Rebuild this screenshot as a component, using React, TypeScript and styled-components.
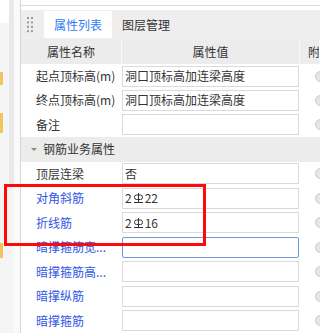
import styled, { createGlobalStyle } from "styled-components";

const GlobalStyle = createGlobalStyle`
  html, body {
    margin: 0;
    padding: 0;
    background: #ffffff;
  }
  body {
    font-family: "Noto Sans CJK SC", "Liberation Sans", sans-serif;
    font-size: 12px;
    color: #333333;
  }
`;

const Page = styled.div`
  position: relative;
  width: 320px;
  height: 333px;
  overflow: hidden;
  display: flex;
  background: #ffffff;
`;

const SideStrip = styled.div`
  width: 20px;
  flex-shrink: 0;
  display: flex;
  background: #f5f5f5;
`;

const MarkColumn = styled.div`
  width: 9px;
  display: flex;
  flex-direction: column;
`;

const MarkTop = styled.div`
  height: 23px;
  background: #ffffff;
`;

const Mark = styled.div<{ $gap: number; $h: number }>`
  width: 3px;
  height: ${(p) => p.$h}px;
  margin-top: ${(p) => p.$gap}px;
  background: #f2c462;
`;

const Track = styled.div`
  width: 5px;
  height: 187px;
  background: #e9e9e9;
  border-radius: 0 0 2px 2px;
`;

const StripEdge = styled.div`
  flex: 1;
  background: #fafafa;
`;

const Panel = styled.div`
  flex: 1;
  display: flex;
  flex-direction: column;
  border-left: 1px solid #d6d6d6;
  min-width: 0;
`;

const TopBox = styled.div`
  height: 5px;
  border-bottom: 1px solid #dcdcdc;
  margin-bottom: 4px;
`;

const TabBar = styled.div`
  height: 30px;
  box-sizing: border-box;
  padding: 1px 0;
  display: flex;
  align-items: stretch;
  background: #eeeeee;
`;

const Grip = styled.div`
  width: 23px;
  display: flex;
  align-items: center;
  padding-left: 6px;
  box-sizing: border-box;
`;

const Tab = styled.div<{ $active?: boolean }>`
  display: flex;
  align-items: center;
  padding: 0 10px;
  font-size: 12px;
  line-height: 1;
  background: ${(p) => (p.$active ? "#ffffff" : "transparent")};
  color: ${(p) => (p.$active ? "#2f7df6" : "#333333")};
`;

const HeaderRow = styled.div`
  height: 25px;
  display: flex;
  background: #ececec;
`;

const HeaderCell = styled.div<{ $w?: number }>`
  ${(p) => (p.$w ? `width: ${p.$w}px;` : "flex: 1;")}
  flex-shrink: 0;
  box-sizing: border-box;
  border-right: 1px solid #f8f8f8;
  display: flex;
  align-items: center;
  justify-content: ${(p) => (p.$w ? "center" : "flex-start")};
  padding-left: ${(p) => (p.$w ? 0 : 8)}px;
  font-size: 12px;
  line-height: 1;
  white-space: nowrap;
  overflow: hidden;
`;

const Row = styled.div`
  height: 25px;
  display: flex;
  align-items: center;
`;

const Label = styled.div<{ $blue?: boolean }>`
  width: 101px;
  flex-shrink: 0;
  box-sizing: border-box;
  padding-left: 15px;
  font-size: 12px;
  line-height: 1;
  white-space: nowrap;
  color: ${(p) => (p.$blue ? "#2f55e4" : "#333333")};
`;

const ValueBox = styled.div<{ $focused?: boolean }>`
  width: 177px;
  height: 21px;
  flex-shrink: 0;
  box-sizing: border-box;
  border: 1px solid ${(p) => (p.$focused ? "#6b9ad9" : "#dadada")};
  border-radius: ${(p) => (p.$focused ? 2 : 0)}px;
  background: #ffffff;
  display: flex;
  align-items: center;
  padding-left: 2px;
  font-size: 12px;
  line-height: 1;
  white-space: nowrap;
  overflow: hidden;
`;

const RadioCell = styled.div`
  flex: 1;
  display: flex;
  align-items: center;
  padding-left: 16px;
`;

const Radio = styled.div`
  width: 9px;
  height: 9px;
  flex-shrink: 0;
  border-radius: 50%;
  border: 1px solid #c9c9c9;
  background: #e6e6e6;
`;

const GroupRow = styled.div`
  height: 25px;
  display: flex;
  align-items: center;
  background: #ececec;
  padding-left: 10px;
  font-size: 12px;
  line-height: 1;
`;

const Caret = styled.span`
  width: 0;
  height: 0;
  border-left: 3px solid transparent;
  border-right: 3px solid transparent;
  border-top: 3px solid #8a8a8a;
  margin-right: 6px;
`;

const Highlight = styled.div`
  position: absolute;
  left: 4px;
  top: 184px;
  width: 202px;
  height: 62px;
  box-sizing: border-box;
  border: 3px solid #ff0a0a;
  pointer-events: none;
`;

const RebarSign = styled.svg`
  margin: 0 1px 0 1px;
  flex-shrink: 0;
`;

function GripDots() {
  const dots = [];
  for (let r = 0; r < 4; r++) {
    for (let c = 0; c < 2; c++) {
      dots.push(<rect key={`${r}-${c}`} x={c * 4} y={r * 4.4} width={2} height={2} fill="#9a9a9a" />);
    }
  }
  return (
    <svg width="6" height="16" viewBox="0 0 6 16">
      {dots}
    </svg>
  );
}

function Rebar({ count, dia }: { count: number; dia: number }) {
  return (
    <>
      {count}
      <RebarSign width="11" height="12" viewBox="0 0 11 12">
        <path d="M5.5 1 V10.5" stroke="#333" strokeWidth="1" fill="none" />
        <rect x="1.5" y="3" width="8" height="4.5" rx="2" stroke="#333" strokeWidth="1" fill="none" />
        <path d="M1 10.5 H10" stroke="#333" strokeWidth="1" fill="none" />
      </RebarSign>
      {dia}
    </>
  );
}

type Item =
  | { kind: "group"; text: string }
  | { kind: "row"; label: string; blue?: boolean; focused?: boolean; value?: React.ReactNode };

const items: Item[] = [
  { kind: "row", label: "起点顶标高(m)", value: "洞口顶标高加连梁高度" },
  { kind: "row", label: "终点顶标高(m)", value: "洞口顶标高加连梁高度" },
  { kind: "row", label: "备注" },
  { kind: "group", text: "钢筋业务属性" },
  { kind: "row", label: "顶层连梁", value: "否" },
  { kind: "row", label: "对角斜筋", blue: true, value: <Rebar count={2} dia={22} /> },
  { kind: "row", label: "折线筋", blue: true, value: <Rebar count={2} dia={16} /> },
  { kind: "row", label: "暗撑箍筋宽...", blue: true, focused: true },
  { kind: "row", label: "暗撑箍筋高...", blue: true },
  { kind: "row", label: "暗撑纵筋", blue: true },
  { kind: "row", label: "暗撑箍筋", blue: true },
];

function App() {
  return (
    <Page>
      <GlobalStyle />
      <SideStrip>
        <MarkColumn>
          <MarkTop />
          <Mark $gap={49} $h={13} />
          <Mark $gap={28} $h={20} />
          <Mark $gap={110} $h={15} />
        </MarkColumn>
        <Track />
        <StripEdge />
      </SideStrip>
      <Panel>
        <TopBox />
        <TabBar>
          <Grip>
            <GripDots />
          </Grip>
          <Tab $active>属性列表</Tab>
          <Tab>图层管理</Tab>
        </TabBar>
        <HeaderRow>
          <HeaderCell $w={101}>属性名称</HeaderCell>
          <HeaderCell $w={178}>属性值</HeaderCell>
          <HeaderCell>附加</HeaderCell>
        </HeaderRow>
        {items.map((it, i) =>
          it.kind === "group" ? (
            <GroupRow key={i}>
              <Caret />
              {it.text}
            </GroupRow>
          ) : (
            <Row key={i}>
              <Label $blue={it.blue}>{it.label}</Label>
              <ValueBox $focused={it.focused}>{it.value}</ValueBox>
              <RadioCell>
                <Radio />
              </RadioCell>
            </Row>
          )
        )}
      </Panel>
      <Highlight />
    </Page>
  );
}

export default App;
